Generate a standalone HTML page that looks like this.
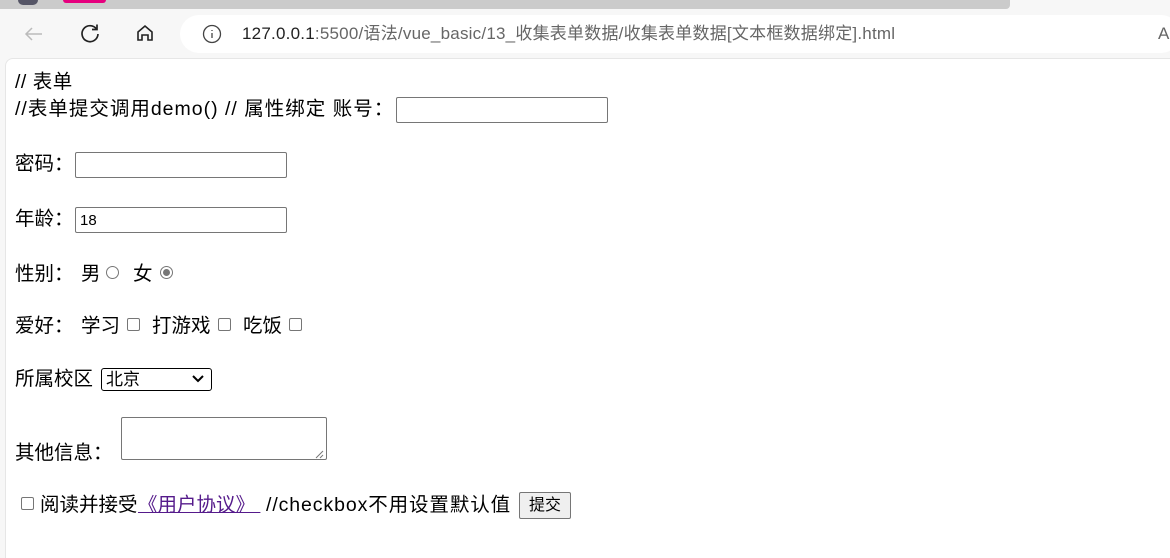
<!DOCTYPE html>
<html><head><meta charset="utf-8"><style>
*{margin:0;padding:0;box-sizing:border-box}
body{width:1170px;height:556px;overflow:hidden;background:#f7f7f7;font-family:"Liberation Sans","Noto Sans CJK SC",sans-serif;position:relative;color:#000}
.a{position:absolute;white-space:nowrap;font-size:19.5px;line-height:20px}
.inp{position:absolute;border:1px solid #767676;border-radius:2px;background:#fff;height:26px}
.rad{position:absolute;width:13px;height:13px;border:1px solid #767676;border-radius:50%;background:#fff}
.cb{position:absolute;width:13px;height:13px;border:1px solid #767676;border-radius:2px;background:#fff}
</style></head><body>
<div style="position:absolute;left:0;top:0;width:1010px;height:9px;background:#cbcbcb;border-bottom-right-radius:4px"></div>
<div style="position:absolute;left:18px;top:0;width:20px;height:5px;background:#556;border-radius:0 0 10px 10px"></div>
<div style="position:absolute;left:63px;top:0;width:43px;height:3px;background:#e6007e;border-radius:0 0 3px 3px"></div>
<svg style="position:absolute;left:22px;top:22px" width="24" height="24" viewBox="0 0 24 24" fill="none" stroke="#bbb" stroke-width="1.5"><path d="M20 12H4M10 6l-6 6 6 6"/></svg>
<svg style="position:absolute;left:79px;top:22px" width="22" height="22" viewBox="0 0 22 22" fill="none" stroke="#222" stroke-width="1.7"><path d="M17.5 7A8 8 0 1 0 19 12"/><path d="M18 2.5V7.5H13"/></svg>
<svg style="position:absolute;left:135px;top:23px" width="20" height="20" viewBox="0 0 20 20" fill="none" stroke="#222" stroke-width="1.6"><path d="M3 9L10 3l7 6v8h-4v-5H7v5H3z"/></svg>
<div style="position:absolute;left:180px;top:15px;width:1000px;height:38px;background:#fff;border-radius:19px"></div>
<svg style="position:absolute;left:202px;top:24px" width="20" height="20" viewBox="0 0 20 20" fill="none" stroke="#444" stroke-width="1.3"><circle cx="10" cy="10" r="8.5"/><path d="M10 9v5M10 6v1"/></svg>
<div class="a" style="left:242px;top:24px;font-size:17px;color:#222;letter-spacing:0.22px">127.0.0.1<span style="color:#666">:5500/语法/vue_basic/13_收集表单数据/收集表单数据[文本框数据绑定].html</span></div>
<div class="a" style="left:1158px;top:24px;font-size:17px;color:#666">A</div>
<div style="position:absolute;left:5px;top:58px;width:1170px;height:500px;background:#fff;border-top-left-radius:8px;border-top:1px solid #e6e6e6;border-left:1px solid #e6e6e6"></div>
<div class="a" style="left:15px;top:72px;letter-spacing:0.5px">// 表单</div>
<div class="a" style="left:15px;top:99px;letter-spacing:1px">//表单提交调用demo() // 属性绑定 账号：</div>
<div class="inp" style="left:396px;top:97px;width:212px"></div>
<div class="a" style="left:15px;top:154px">密码：</div>
<div class="inp" style="left:75px;top:152px;width:212px"></div>
<div class="a" style="left:15px;top:209px">年龄：</div>
<div class="inp" style="left:75px;top:207px;width:212px"></div>
<div class="a" style="left:80px;top:211px;font-size:15px">18</div>
<div class="a" style="left:15px;top:264px">性别：</div>
<div class="a" style="left:81px;top:264px">男</div>
<div class="rad" style="left:106px;top:266px"></div>
<div class="a" style="left:133px;top:264px">女</div>
<div class="rad" style="left:160px;top:266px"></div>
<div style="position:absolute;left:163px;top:269px;width:7px;height:7px;border-radius:50%;background:#767676"></div>
<div class="a" style="left:15px;top:316px">爱好：</div>
<div class="a" style="left:81px;top:316px">学习</div>
<div class="cb" style="left:127px;top:318px"></div>
<div class="a" style="left:152px;top:316px">打游戏</div>
<div class="cb" style="left:218px;top:318px"></div>
<div class="a" style="left:243px;top:316px">吃饭</div>
<div class="cb" style="left:289px;top:318px"></div>
<div class="a" style="left:15px;top:369px">所属校区</div>
<div style="position:absolute;left:101px;top:368px;width:111px;height:23px;border:1.5px solid #000;border-radius:3px;background:#fff"></div>
<div class="a" style="left:106px;top:370px;font-size:17px">北京</div>
<svg style="position:absolute;left:192px;top:375px" width="12" height="8" viewBox="0 0 12 8" fill="none" stroke="#000" stroke-width="2"><path d="M1 1l5 5 5-5"/></svg>
<div class="a" style="left:15px;top:443px">其他信息：</div>
<div class="inp" style="left:121px;top:417px;width:206px;height:43px"></div>
<svg style="position:absolute;left:314px;top:449px" width="10" height="10" viewBox="0 0 10 10" stroke="#777" stroke-width="1"><path d="M9 2L2 9M9 6L6 9"/></svg>
<div class="cb" style="left:21px;top:497px"></div>
<div class="a" style="left:40px;top:495px">阅读并接受</div>
<div class="a" style="left:138px;top:495px;color:#551a8b;text-decoration:underline">《用户协议》&nbsp;</div>
<div class="a" style="left:266px;top:495px;letter-spacing:0.9px">//checkbox不用设置默认值</div>
<div style="position:absolute;left:519px;top:492px;width:52px;height:27px;background:#efefef;border:1px solid #767676;border-radius:2px;font-size:16px;line-height:25px;text-align:center">提交</div>
</body></html>
